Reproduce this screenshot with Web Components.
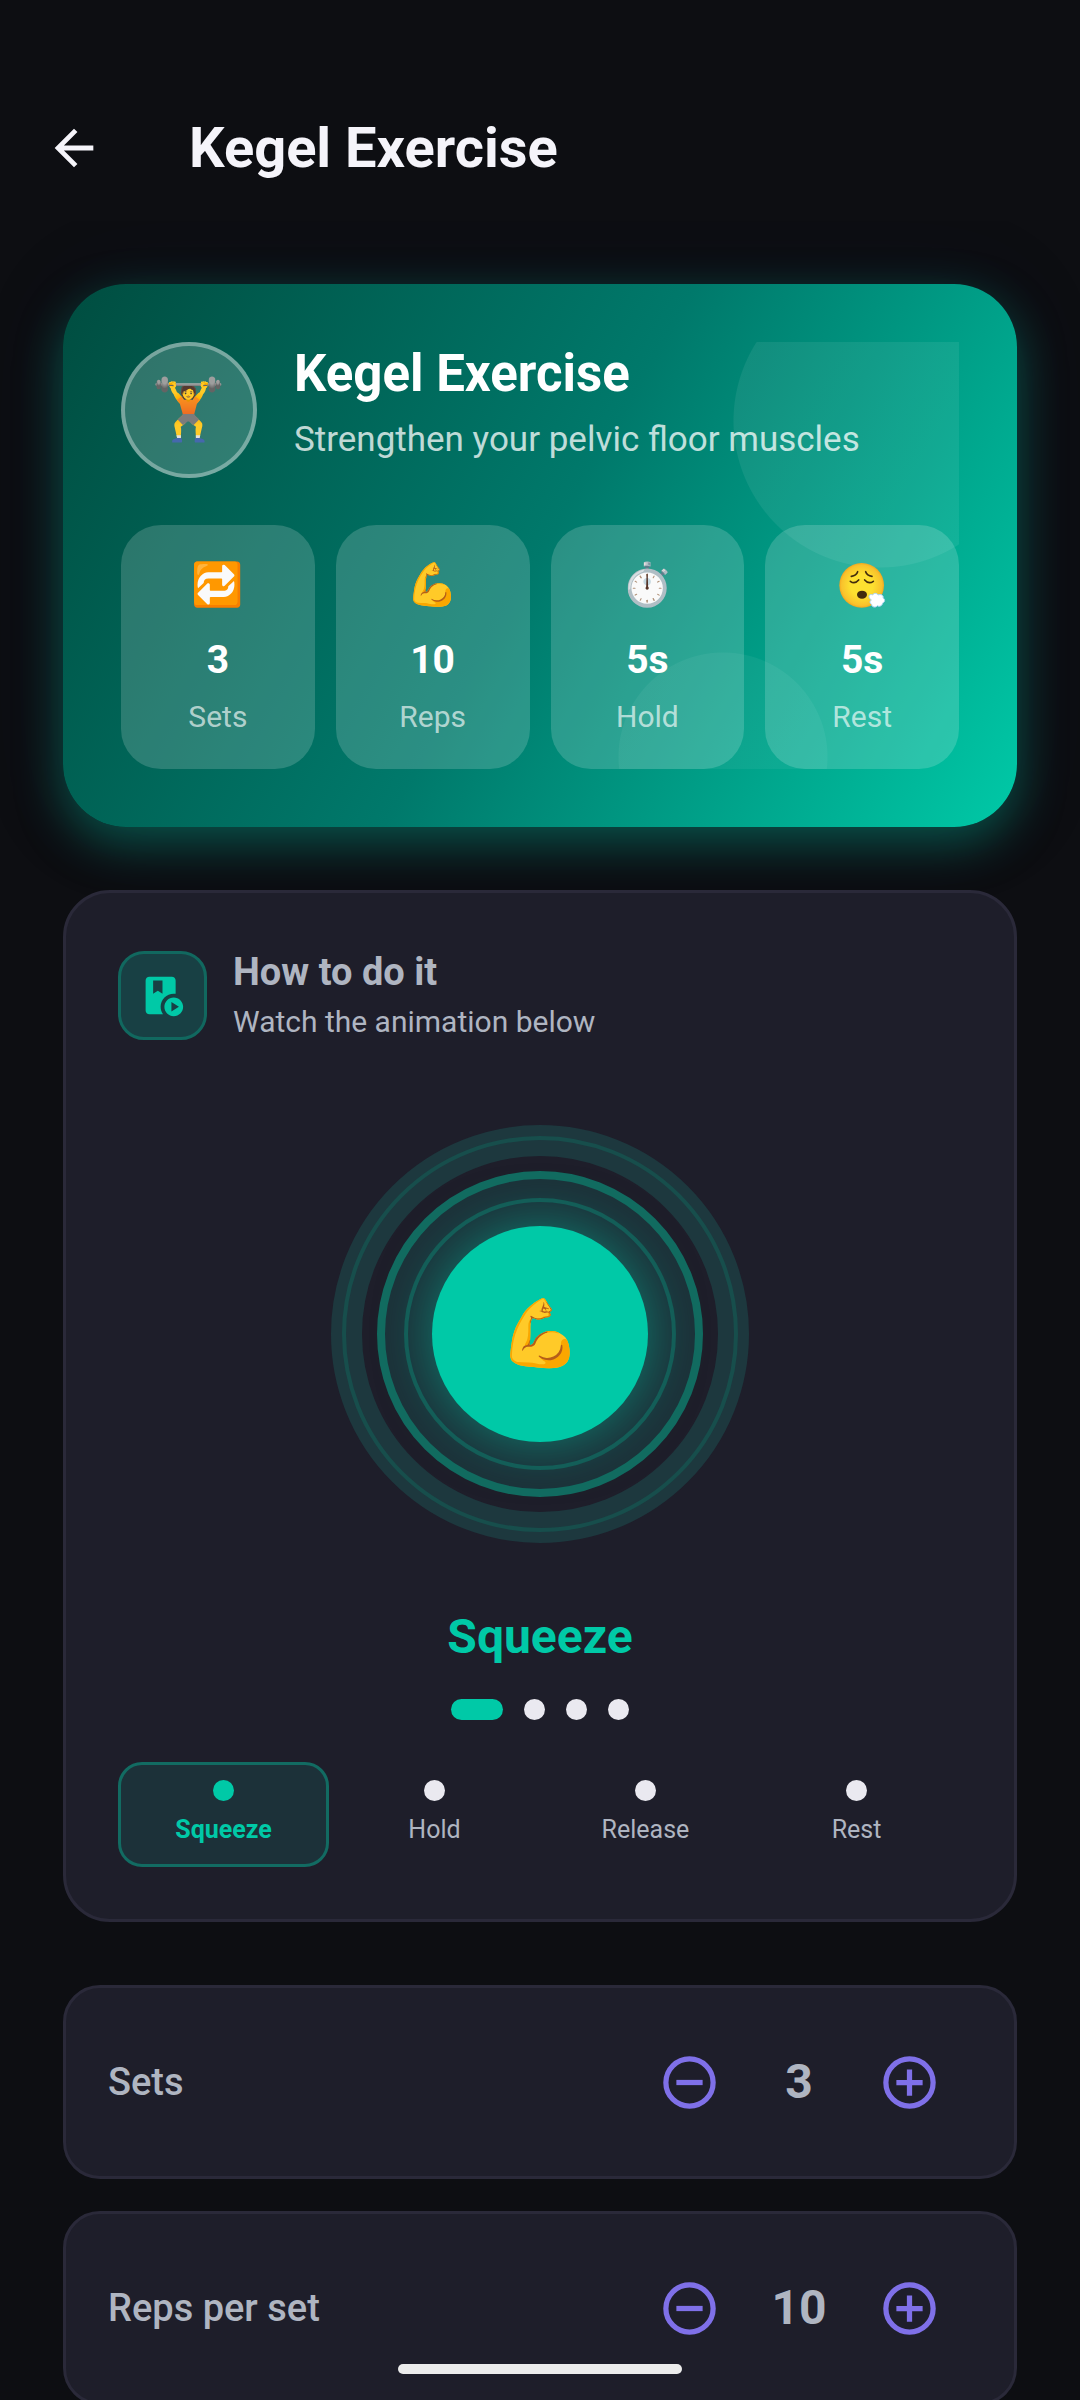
<!DOCTYPE html>
<html lang="en">
<head>
<meta charset="utf-8">
<meta name="viewport" content="width=device-width, initial-scale=1">
<title>Kegel Exercise</title>
<style>
  :root {
    --bg: #0d0e12;
    --surface: #1e1e2a;
    --outline: #2a2939;
    --accent: #00c9a7;
    --violet: #7f70e8;
    --muted: #afb5c1;
    --light: #eae9f0;
  }

  body {
    margin: 0;
    background: var(--bg);
    color: var(--muted);
    font-family: Roboto, "Noto Color Emoji", sans-serif;
  }
</style>
</head>
<body>
<app-screen>
  <app-header slot="header">Kegel Exercise</app-header>

  <hero-card>
    <span slot="icon">🏋️</span>
    <span slot="title">Kegel Exercise</span>
    <span slot="subtitle">Strengthen your pelvic floor muscles</span>
    <stat-tile value="3"><span slot="icon">🔁</span>Sets</stat-tile>
    <stat-tile value="10"><span slot="icon">💪</span>Reps</stat-tile>
    <stat-tile value="5s"><span slot="icon">⏱️</span>Hold</stat-tile>
    <stat-tile value="5s"><exhale-face slot="icon"></exhale-face>Rest</stat-tile>
  </hero-card>

  <guide-card>
    <span slot="title">How to do it</span>
    <span slot="subtitle">Watch the animation below</span>
    <pulse-rings>💪</pulse-rings>
    <phase-steps phases="Squeeze,Hold,Release,Rest" current="0"></phase-steps>
  </guide-card>

  <div class="settings" slot="settings">
    <stepper-row value="3" min="1" max="10">Sets</stepper-row>
    <stepper-row value="10" min="1" max="50">Reps per set</stepper-row>
  </div>
</app-screen>

<script>
// Builds a template from a string of styles and markup.
function html(markup) {
  const template = document.createElement('template');
  template.innerHTML = markup;
  return template;
}

class BaseElement extends HTMLElement {
  constructor() {
    super();
    this.attachShadow({ mode: 'open' });
    this.shadowRoot.appendChild(this.constructor.template.content.cloneNode(true));
  }

  $(selector) {
    return this.shadowRoot.querySelector(selector);
  }
}

// Full height screen: fixed header, scrolling content, gesture bar on top.
class AppScreen extends BaseElement {
  static template = html(`
    <style>
      :host {
        display: flex;
        flex-direction: column;
        height: 100vh;
        overflow: hidden;
      }

      main {
        flex: 1;
        min-height: 0;
        overflow-y: auto;
        scrollbar-width: none;
        display: flex;
        flex-direction: column;
        gap: 63px;
        padding: 63px;
      }

      .gesture-bar {
        position: fixed;
        left: 50%;
        bottom: 26px;
        width: 284px;
        height: 10px;
        margin-left: -142px;
        border-radius: 5px;
        background: #ececec;
      }

      ::slotted(.settings) {
        display: flex;
        flex-direction: column;
        gap: 32px;
      }
    </style>
    <slot name="header"></slot>
    <main>
      <slot></slot>
      <slot name="settings"></slot>
    </main>
    <div class="gesture-bar"></div>
  `);
}

class AppHeader extends BaseElement {
  static template = html(`
    <style>
      :host {
        display: block;
        padding-top: 74px;
        color: #f5f4fa;
      }

      header {
        display: flex;
        align-items: center;
        gap: 42px;
        height: 147px;
      }

      button {
        display: grid;
        place-items: center;
        width: 147px;
        height: 147px;
        padding: 0;
        border: 0;
        background: none;
        color: inherit;
        cursor: pointer;
      }

      svg {
        width: 58px;
        height: 58px;
        fill: currentColor;
      }

      h1 {
        margin: 0;
        font-size: 56px;
        line-height: 68px;
        font-weight: 700;
      }
    </style>
    <header>
      <button type="button" aria-label="Back">
        <svg viewBox="0 0 24 24"><path d="M20 11H7.83l5.59-5.59L12 4l-8 8 8 8 1.41-1.41L7.83 13H20z"/></svg>
      </button>
      <h1><slot></slot></h1>
    </header>
  `);

  connectedCallback() {
    this.$('button').addEventListener('click', () => history.back());
  }
}

class HeroCard extends BaseElement {
  static template = html(`
    <style>
      :host {
        display: block;
        padding: 58px;
        border-radius: 63px;
        background: linear-gradient(120deg, #004d40, #00796b 50%, #00c9a7);
        box-shadow: 0 16px 48px rgba(0, 201, 167, 0.36), 0 0 96px rgba(20, 50, 110, 0.1);
        color: #fff;
      }

      /* two pale discs, cut off at the edge of the content box */
      .content {
        display: flex;
        flex-direction: column;
        gap: 47px;
        background:
          radial-gradient(circle at calc(100% - 79px) 79px, rgba(255, 255, 255, 0.07) 146px, transparent 147px),
          radial-gradient(circle at calc(100% - 236px) calc(100% - 12px), rgba(255, 255, 255, 0.05) 104px, transparent 105px);
      }

      .intro {
        display: flex;
        gap: 37px;
      }

      .avatar {
        box-sizing: border-box;
        flex: none;
        display: grid;
        place-items: center;
        width: 136px;
        height: 136px;
        border: 4px solid rgba(255, 255, 255, 0.35);
        border-radius: 50%;
        background: rgba(255, 255, 255, 0.19);
        font-size: 60px;
        line-height: 72px;
      }

      h2, p {
        margin: 0;
      }

      h2 {
        font-size: 51px;
        line-height: 64px;
        font-weight: 700;
      }

      p {
        margin-top: 12px;
        font-size: 35px;
        line-height: 44px;
        color: rgba(255, 255, 255, 0.75);
      }

      .stats {
        display: grid;
        grid-template-columns: repeat(4, 1fr);
        gap: 21px;
      }
    </style>
    <div class="content">
      <div class="intro">
        <div class="avatar"><slot name="icon"></slot></div>
        <div>
          <h2><slot name="title"></slot></h2>
          <p><slot name="subtitle"></slot></p>
        </div>
      </div>
      <div class="stats"><slot></slot></div>
    </div>
  `);
}

class StatTile extends BaseElement {
  static template = html(`
    <style>
      :host {
        display: flex;
        flex-direction: column;
        align-items: center;
        padding: 34px 0 32px;
        border-radius: 40px;
        background: rgba(255, 255, 255, 0.17);
      }

      .icon {
        height: 52px;
        font-size: 42px;
        line-height: 52px;
      }

      .value {
        margin: 21px 0 9px;
        font-size: 39px;
        line-height: 56px;
        font-weight: 700;
      }

      .label {
        font-size: 30px;
        line-height: 40px;
        color: rgba(255, 255, 255, 0.65);
      }
    </style>
    <span class="icon"><slot name="icon"></slot></span>
    <span class="value"></span>
    <span class="label"><slot></slot></span>
  `);

  connectedCallback() {
    this.$('.value').textContent = this.getAttribute('value');
  }
}

// Tired face breathing out a small cloud.
class ExhaleFace extends BaseElement {
  static template = html(`
    <style>
      :host {
        display: block;
      }

      svg {
        display: block;
        width: 52px;
        height: 52px;
      }
    </style>
    <svg viewBox="18 18 156 156" role="img" aria-label="Face exhaling">
      <defs>
        <radialGradient id="skin">
          <stop offset="0.5" stop-color="#fde030"/>
          <stop offset="0.9" stop-color="#f9c22c"/>
          <stop offset="1" stop-color="#f2a81f"/>
        </radialGradient>
      </defs>
      <circle cx="95" cy="97" r="67" fill="url(#skin)"/>
      <g fill="none" stroke="#422b0d" stroke-width="5" stroke-linecap="round">
        <path d="M64 70q15-2 19-14M107 56q4 12 19 14"/>
        <path d="M61 85q13 10 25-4M104 81q12 14 26 4"/>
      </g>
      <ellipse cx="96" cy="125" rx="15" ry="12" fill="#422b0d"/>
      <path d="M117 130c0-5 7-7 11-4 3-7 14-6 16 0 8-4 18 1 15 9 7 3 6 13-1 15-1 8-10 13-16 8-5 8-18 4-17-4-6-2-7-10-1-13-3-2-7-6-7-11z" fill="#fff" stroke="#a8d4f5" stroke-width="3"/>
    </svg>
  `);
}

class GuideCard extends BaseElement {
  static template = html(`
    <style>
      :host {
        display: block;
        padding: 52px;
        border: 3px solid var(--outline);
        border-radius: 47px;
        background: var(--surface);
      }

      header {
        display: flex;
        align-items: center;
        gap: 26px;
      }

      .badge {
        box-sizing: border-box;
        display: grid;
        place-items: center;
        width: 89px;
        height: 89px;
        border: 3px solid #11685f;
        border-radius: 26px;
        background: #184044;
      }

      svg {
        width: 45px;
        height: 45px;
        fill: var(--accent);
      }

      h2, p {
        margin: 0;
      }

      h2 {
        font-size: 38px;
        line-height: 54px;
        font-weight: 700;
      }

      p {
        font-size: 30px;
        line-height: 46px;
      }
    </style>
    <header>
      <div class="badge">
        <svg viewBox="0 0 24 24">
          <path d="M18 11c.34 0 .67.03 1 .08V4c0-1.1-.9-2-2-2H5c-1.1 0-2 .9-2 2v16c0 1.1.9 2 2 2h7.26C11.47 20.87 11 19.49 11 18c0-3.87 3.13-7 7-7zM7 11V4h5v7L9.5 9.5z"/>
          <path d="M18 13c-2.76 0-5 2.24-5 5s2.24 5 5 5 5-2.24 5-5-2.24-5-5-5zm-1.25 7.5v-5l4 2.5z"/>
        </svg>
      </div>
      <div>
        <h2><slot name="title"></slot></h2>
        <p><slot name="subtitle"></slot></p>
      </div>
    </header>
    <slot></slot>
  `);
}

// Concentric rings with the emoji of the phase in the middle.
class PulseRings extends BaseElement {
  static template = html(`
    <style>
      :host {
        display: grid;
        place-items: center;
        margin-top: 80px;
      }

      svg, .core {
        grid-area: 1 / 1;
      }

      svg {
        width: 418px;
        height: 418px;
        fill: none;
      }

      .core {
        display: grid;
        place-items: center;
        width: 216px;
        height: 216px;
        border-radius: 50%;
        background: var(--accent);
        box-shadow: 0 0 54px rgba(0, 201, 167, 0.5);
        font-size: 66px;
        line-height: 78px;
      }
    </style>
    <svg viewBox="0 0 418 418">
      <circle cx="209" cy="209" r="193.5" stroke="#1d383e" stroke-width="31"/>
      <circle cx="209" cy="209" r="196" stroke="#174e4c" stroke-width="4"/>
      <circle cx="209" cy="209" r="159" fill="#1c3139" stroke="#126b60" stroke-width="8"/>
      <circle cx="209" cy="209" r="134" stroke="#155753" stroke-width="4"/>
    </svg>
    <div class="core"><slot></slot></div>
  `);
}

class PhaseSteps extends BaseElement {
  static template = html(`
    <style>
      :host {
        display: flex;
        flex-direction: column;
        align-items: center;
        margin-top: 62px;
      }

      h3 {
        margin: 0;
        font-size: 48px;
        line-height: 64px;
        font-weight: 700;
        color: var(--accent);
      }

      .dots {
        display: flex;
        gap: 21px;
        margin: 30px 0 42px;
      }

      .dot {
        width: 21px;
        height: 21px;
        border-radius: 11px;
        background: var(--light);
      }

      .current.dot,
      .current .dot {
        background: var(--accent);
      }

      .dots .current {
        width: 52px;
      }

      ol {
        align-self: stretch;
        display: grid;
        grid-auto-flow: column;
        grid-auto-columns: 1fr;
        margin: 0;
        padding: 0;
        list-style: none;
      }

      li {
        display: flex;
        flex-direction: column;
        align-items: center;
        gap: 11px;
        padding: 15px 0 16px;
        border: 3px solid transparent;
        border-radius: 24px;
        font-size: 25px;
        line-height: 36px;
      }

      li.current {
        border-color: #126b62;
        background: #1c3139;
        color: var(--accent);
        font-weight: 700;
      }
    </style>
    <h3></h3>
    <div class="dots"></div>
    <ol></ol>
  `);

  connectedCallback() {
    const phases = this.getAttribute('phases').split(',');
    const current = Number(this.getAttribute('current'));

    this.$('h3').textContent = phases[current];
    phases.forEach((phase, index) => {
      const state = index === current ? 'current' : '';
      this.$('.dots').insertAdjacentHTML('beforeend', `<span class="dot ${state}"></span>`);
      this.$('ol').insertAdjacentHTML('beforeend', `<li class="${state}"><span class="dot"></span>${phase}</li>`);
    });
  }
}

class StepperRow extends BaseElement {
  static template = html(`
    <style>
      :host {
        display: flex;
        align-items: center;
        justify-content: space-between;
        padding: 31px 42px;
        border: 3px solid var(--outline);
        border-radius: 37px;
        background: var(--surface);
      }

      .label {
        font-size: 38px;
        line-height: 48px;
        font-weight: 500;
      }

      .controls {
        display: flex;
        align-items: center;
      }

      button {
        display: grid;
        place-items: center;
        width: 126px;
        height: 126px;
        padding: 0;
        border: 0;
        background: none;
        color: var(--violet);
        cursor: pointer;
      }

      svg {
        width: 63px;
        height: 63px;
        fill: none;
        stroke: currentColor;
        stroke-width: 2;
      }

      output {
        width: 94px;
        text-align: center;
        font-size: 48px;
        line-height: 56px;
        font-weight: 700;
      }
    </style>
    <span class="label" id="label"><slot></slot></span>
    <div class="controls" role="group" aria-labelledby="label">
      <button type="button" class="less" aria-label="Decrease">
        <svg viewBox="0 0 24 24"><circle cx="12" cy="12" r="9"/><path d="M7 12h10"/></svg>
      </button>
      <output></output>
      <button type="button" class="more" aria-label="Increase">
        <svg viewBox="0 0 24 24"><circle cx="12" cy="12" r="9"/><path d="M7 12h10M12 7v10"/></svg>
      </button>
    </div>
  `);

  connectedCallback() {
    this.$('output').textContent = this.getAttribute('value');
    this.$('.less').addEventListener('click', () => this.change(-1));
    this.$('.more').addEventListener('click', () => this.change(1));
  }

  change(step) {
    const min = Number(this.getAttribute('min'));
    const max = Number(this.getAttribute('max'));
    const value = Math.min(max, Math.max(min, Number(this.getAttribute('value')) + step));
    this.setAttribute('value', value);
    this.$('output').textContent = value;
  }
}

customElements.define('app-screen', AppScreen);
customElements.define('app-header', AppHeader);
customElements.define('hero-card', HeroCard);
customElements.define('stat-tile', StatTile);
customElements.define('exhale-face', ExhaleFace);
customElements.define('guide-card', GuideCard);
customElements.define('pulse-rings', PulseRings);
customElements.define('phase-steps', PhaseSteps);
customElements.define('stepper-row', StepperRow);
</script>
</body>
</html>
